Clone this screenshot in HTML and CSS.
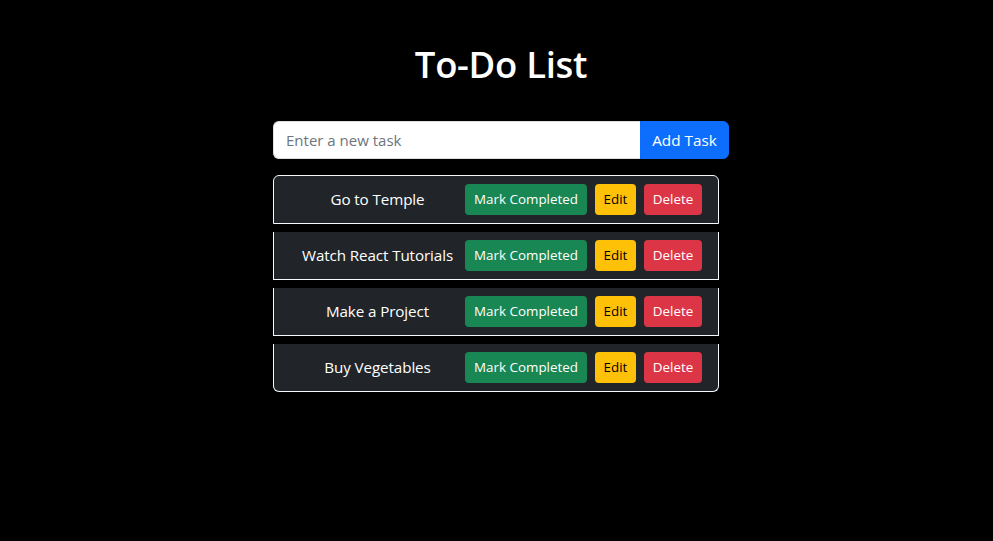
FILE: index.html
```html
<!DOCTYPE html>
<html lang="en">
<head>
<meta charset="utf-8">
<title>To-Do List</title>
<link rel="stylesheet" href="styles.css">
</head>
<body>
<main class="app">
  <h1 class="title">To-Do List</h1>
  <div class="input-group">
    <input class="task-input" type="text" placeholder="Enter a new task">
    <button class="btn btn-primary">Add Task</button>
  </div>
  <ul class="list">
    <li class="item">
      <span class="item-text">Go to Temple</span>
      <button class="btn btn-sm btn-success">Mark Completed</button>
      <button class="btn btn-sm btn-warning">Edit</button>
      <button class="btn btn-sm btn-danger">Delete</button>
    </li>
    <li class="item">
      <span class="item-text">Watch React Tutorials</span>
      <button class="btn btn-sm btn-success">Mark Completed</button>
      <button class="btn btn-sm btn-warning">Edit</button>
      <button class="btn btn-sm btn-danger">Delete</button>
    </li>
    <li class="item">
      <span class="item-text">Make a Project</span>
      <button class="btn btn-sm btn-success">Mark Completed</button>
      <button class="btn btn-sm btn-warning">Edit</button>
      <button class="btn btn-sm btn-danger">Delete</button>
    </li>
    <li class="item">
      <span class="item-text">Buy Vegetables</span>
      <button class="btn btn-sm btn-success">Mark Completed</button>
      <button class="btn btn-sm btn-warning">Edit</button>
      <button class="btn btn-sm btn-danger">Delete</button>
    </li>
  </ul>
</main>
</body>
</html>
```
FILE: styles.css
```css
* { box-sizing: border-box; }
html, body { margin: 0; padding: 0; background: #000; }
body {
  font-family: "Open Sans", "Noto Sans", sans-serif;
  color: #fff;
  font-size: 16px;
  line-height: 1.5;
}
.app {
  width: 456px;
  margin-left: 273px;
  padding-top: 40px;
}
.title {
  margin: 0 0 33px;
  text-align: center;
  font-size: 36.5px;
  font-weight: 600;
  line-height: 48px;
  letter-spacing: -0.3px;
}
.input-group {
  display: flex;
  height: 38px;
  margin-bottom: 16px;
}
.task-input {
  flex: 1;
  min-width: 0;
  border: 1px solid #dee2e6;
  border-right: 0;
  border-radius: 6px 0 0 6px;
  padding: 6px 12px;
  font: inherit;
  font-size: 15px;
  color: #212529;
  background: #fff;
  outline: none;
}
.task-input::placeholder { color: #6c757d; }
.btn {
  font-family: inherit;
  border: 1px solid transparent;
  cursor: pointer;
  white-space: nowrap;
}
.btn-primary {
  width: 89px;
  background: #0d6efd;
  border-color: #0d6efd;
  color: #fff;
  font-size: 15.3px;
  border-radius: 0 6px 6px 0;
  padding: 0;
}
.list {
  list-style: none;
  margin: 0;
  padding: 0;
  width: 446px;
}
.item {
  display: flex;
  align-items: center;
  background: #212529;
  border: 1px solid #f8f9fa;
  border-top-width: 0;
  padding: 8px 16px;
  margin-bottom: 8px;
}
.item:first-child {
  border-top-width: 1px;
  border-radius: 6px 6px 0 0;
}
.item:last-child {
  border-radius: 0 0 6px 6px;
}
.item-text {
  flex: 1;
  text-align: center;
  font-size: 15.2px;
  letter-spacing: -0.1px;
  white-space: nowrap;
}
.btn-sm {
  height: 31px;
  padding: 0;
  font-size: 13.4px;
  border-radius: 4px;
  line-height: 29px;
}
.btn-success { width: 122px; background: #198754; color: #fff; }
.btn-warning { width: 41px; background: #ffc107; color: #000; margin-left: 8px; }
.btn-danger { width: 58px; background: #dc3545; color: #fff; margin-left: 8px; }
```
